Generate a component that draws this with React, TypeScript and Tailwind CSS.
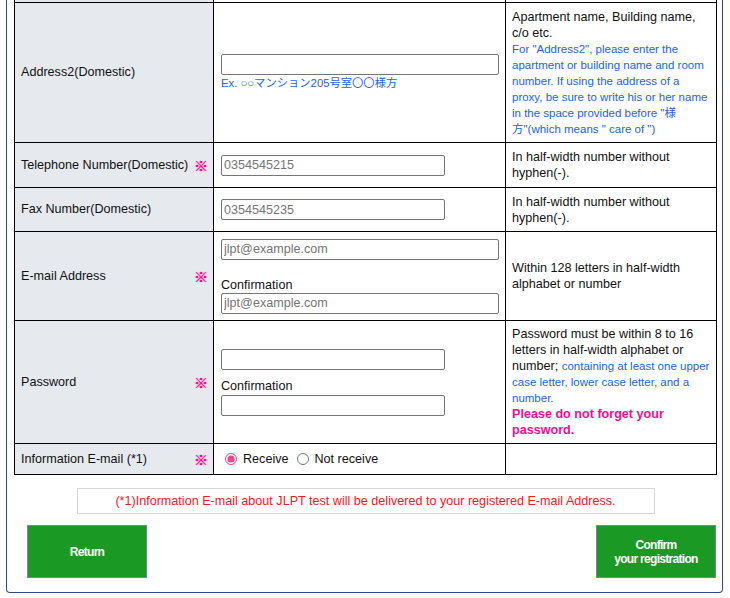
import { useState } from 'react';

const font = { fontFamily: '"Liberation Sans", Arial, Helvetica, "Noto Sans CJK JP", sans-serif' };

function Req() {
  return (
    <span
      className="text-[#ff0a8c] text-[14px] font-black leading-none [text-shadow:0_0_0.8px_#ff0a8c,0_0_0.8px_#ff0a8c]"
      style={{ fontFamily: '"Noto Sans CJK JP", sans-serif' }}
    >
      ※
    </span>
  );
}

function Label({ text, req, h }: { text: string; req?: boolean; h: string }) {
  return (
    <div className={`${h} flex items-center justify-between bg-[#e6eaee] border-r border-b border-black pl-[6px] pr-[5px] text-[12.6px] text-[#111]`}>
      <span>{text}</span>
      {req && <Req />}
    </div>
  );
}

function Field({ children }: { children: React.ReactNode }) {
  return <div className="flex flex-col justify-center border-r border-b border-black pl-[7px] pr-[6px]">{children}</div>;
}

function Note({ children }: { children?: React.ReactNode }) {
  return <div className="flex flex-col justify-center border-r border-b border-black px-[6px] text-[12.6px] leading-[16px] text-[#111]">{children}</div>;
}

function Input({ wide, placeholder, type = 'text' }: { wide?: boolean; placeholder?: string; type?: string }) {
  return (
    <input
      type={type}
      placeholder={placeholder}
      className={`${wide ? 'w-[278px]' : 'w-[224px]'} h-[21px] border border-[#767676] rounded-[2px] px-[2px] text-[12.6px] text-[#111] placeholder:text-[#757575] outline-none bg-white`}
      style={font}
    />
  );
}

export default function App() {
  const [mail, setMail] = useState('receive');

  return (
    <div className="w-[730px] h-[598px] bg-white overflow-hidden" style={font}>
      <div className="ml-[6px] w-[717px] border border-t-0 border-[#2e4c7e] rounded-b-[4px] pl-[7px] pr-[5px] pb-[14px]">
        <div className="grid grid-cols-[199px_292px_211px] border-l border-black w-[703px]">
          {/* clipped row above */}
          <div className="h-[3px] bg-[#e6eaee] border-r border-b border-black" />
          <div className="h-[3px] border-r border-b border-black" />
          <div className="h-[3px] border-r border-b border-black" />

          {/* Address2 */}
          <Label text="Address2(Domestic)" h="h-[140px]" />
          <Field>
            <Input wide />
            <span className="text-[11.3px] leading-[15px] text-[#1a62f0] mt-[1px]">Ex. ○○マンション205号室〇〇様方</span>
          </Field>
          <Note>
            <span>Apartment name, Building name, c/o etc.</span>
            <span className="text-[11.5px] text-[#1a62f0]">
              For "Address2", please enter the apartment or building name and room number. If using the address of a proxy, be sure to write his or her name in the space provided before "様
              <br />
              方"(which means " care of ")
            </span>
          </Note>

          {/* Telephone */}
          <Label text="Telephone Number(Domestic)" req h="h-[45px]" />
          <Field>
            <Input placeholder="0354545215" />
          </Field>
          <Note>In half-width number without hyphen(-).</Note>

          {/* Fax */}
          <Label text="Fax Number(Domestic)" h="h-[44px]" />
          <Field>
            <Input placeholder="0354545235" />
          </Field>
          <Note>In half-width number without hyphen(-).</Note>

          {/* E-mail */}
          <Label text="E-mail Address" req h="h-[89px]" />
          <Field>
            <Input wide placeholder="jlpt@example.com" />
            <span className="mt-[18px] text-[12.6px] leading-[15px] text-[#111]">Confirmation</span>
            <Input wide placeholder="jlpt@example.com" />
          </Field>
          <Note>Within 128 letters in half-width alphabet or number</Note>

          {/* Password */}
          <Label text="Password" req h="h-[123px]" />
          <Field>
            <Input type="password" />
            <span className="mt-[8px] text-[12.6px] leading-[17px] text-[#111]">Confirmation</span>
            <Input type="password" />
          </Field>
          <Note>
            <span>
              Password must be within 8 to 16 letters in half-width alphabet or number;{' '}
              <span className="text-[11.5px] leading-[16px] text-[#1a62f0]">containing at least one upper case letter, lower case letter, and a number.</span>
            </span>
            <span className="font-bold text-[#ff0a8c]">Please do not forget your password.</span>
          </Note>

          {/* Information E-mail */}
          <Label text="Information E-mail (*1)" req h="h-[31px]" />
          <Field>
            <div className="flex items-center text-[12.6px] text-[#111]">
              <label className="flex items-center">
                <input type="radio" name="mail" checked={mail === 'receive'} onChange={() => setMail('receive')} className="w-[12px] h-[12px] ml-[4px] mr-[6px] accent-[#f0458a]" />
                Receive
              </label>
              <label className="flex items-center">
                <input type="radio" name="mail" checked={mail === 'no'} onChange={() => setMail('no')} className="w-[12px] h-[12px] ml-[8px] mr-[6px] accent-[#f0458a]" />
                Not receive
              </label>
            </div>
          </Field>
          <Note />
        </div>

        <div className="flex justify-center mt-[13px]">
          <div className="w-[578px] h-[26px] border border-[#d6d6d6] flex items-center justify-center text-[12.6px] text-[#f5161e]">
            (*1)Information E-mail about JLPT test will be delivered to your registered E-mail Address.
          </div>
        </div>

        <div className="flex justify-between mt-[11px] pl-[13px] pr-[1px]">
          <button className="w-[120px] h-[53px] bg-[#1a9a25] border border-[#7886a2] text-white text-[12px] font-bold tracking-[-0.7px] leading-[14px]" style={font}>
            Return
          </button>
          <button className="w-[120px] h-[53px] bg-[#1a9a25] border border-[#7886a2] text-white text-[12px] font-bold tracking-[-0.7px] leading-[14px]" style={font}>
            Confirm
            <br />
            your registration
          </button>
        </div>
      </div>
    </div>
  );
}
